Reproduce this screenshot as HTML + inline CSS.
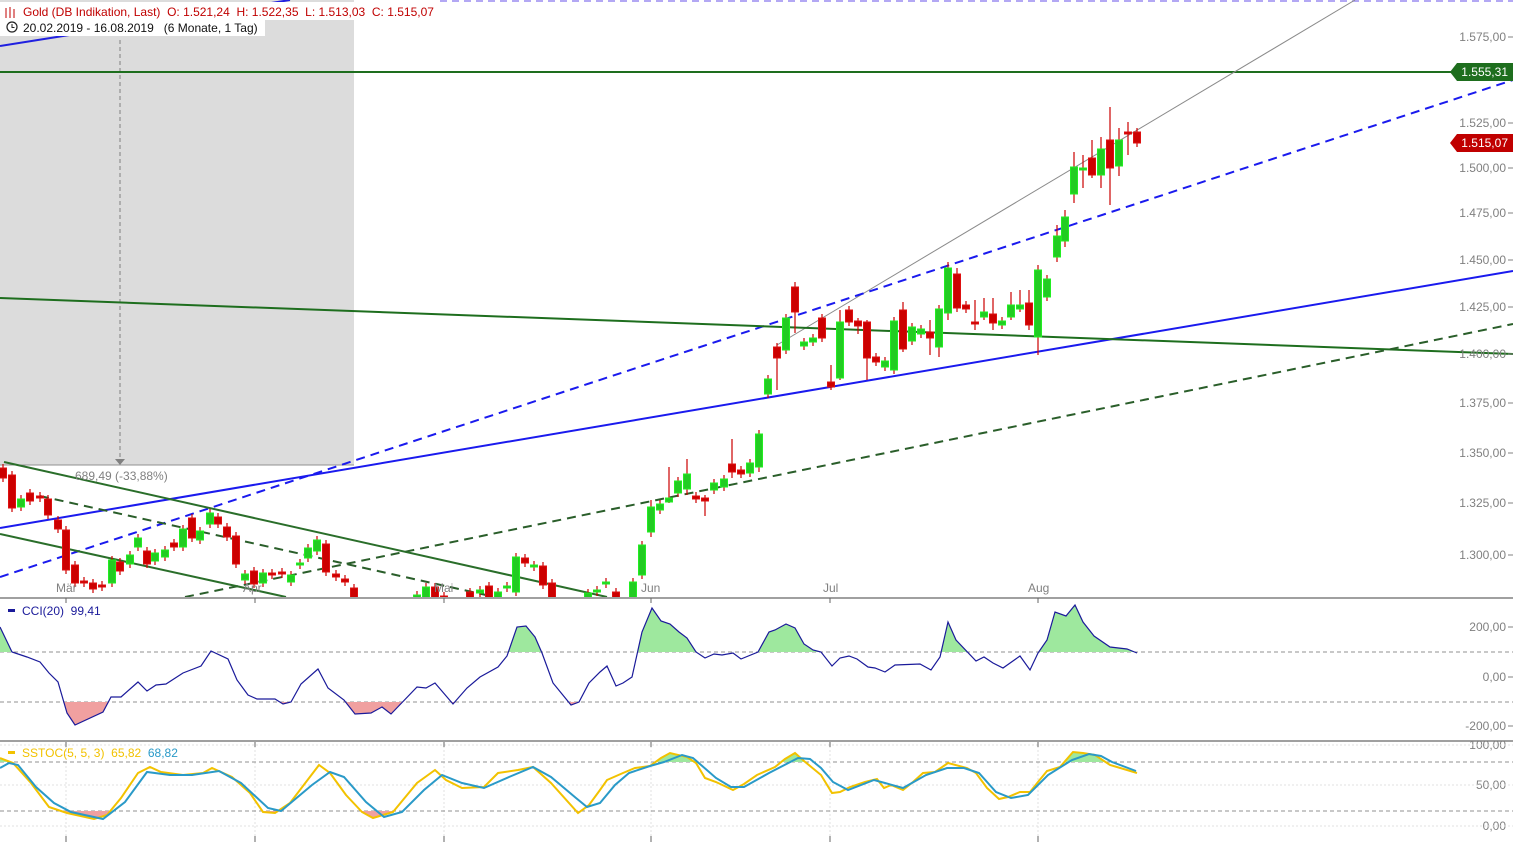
<!DOCTYPE html>
<html><head><meta charset="utf-8"><style>
html,body{margin:0;padding:0;background:#fff;width:1513px;height:842px;overflow:hidden}
svg{display:block;font-family:"Liberation Sans",sans-serif}
.pre{white-space:pre}
</style></head><body>
<svg id="s" width="1513" height="842" xmlns="http://www.w3.org/2000/svg" xml:space="preserve">
<defs>
<clipPath id="cmain"><rect x="0" y="0" width="1513" height="597"/></clipPath>
<clipPath id="cabove"><rect x="0" y="598" width="1513" height="54"/></clipPath>
<clipPath id="cbelow"><rect x="0" y="702" width="1513" height="40"/></clipPath>
<clipPath id="sabove"><rect x="0" y="742" width="1513" height="20"/></clipPath>
<clipPath id="sbelow"><rect x="0" y="811" width="1513" height="30"/></clipPath>
</defs>
<g clip-path="url(#cmain)">
<rect x="0" y="0" width="354" height="465" fill="#dcdcdc"/>
<line x1="440" y1="1" x2="1513" y2="1" stroke="#9a8cf0" stroke-width="1.5" stroke-dasharray="7,5"/>
<line x1="120" y1="40" x2="120" y2="460" stroke="#808080" stroke-dasharray="4,3"/>
<polygon points="115,459 125,459 120,465" fill="#808080"/>
<line x1="0" y1="465" x2="354" y2="465" stroke="#909090"/>
<line x1="0" y1="46" x2="290" y2="0" stroke="#2020e0" stroke-width="2"/>
<line x1="0" y1="72" x2="1513" y2="72" stroke="#1e6e1e" stroke-width="2"/>
<line x1="777" y1="345" x2="1355" y2="0" stroke="#8a8a8a" stroke-width="1"/>
<line x1="0" y1="577" x2="1513" y2="80" stroke="#1a1aee" stroke-width="2" stroke-dasharray="9,6"/>
<line x1="0" y1="528" x2="1513" y2="271" stroke="#1a1aee" stroke-width="2"/>
<line x1="0" y1="298" x2="1513" y2="354" stroke="#1e6e1e" stroke-width="2"/>
<line x1="185" y1="597" x2="1513" y2="324" stroke="#2a5e2a" stroke-width="2" stroke-dasharray="9,6"/>
<line x1="4" y1="462" x2="607" y2="597" stroke="#2a6e2a" stroke-width="2"/>
<line x1="0" y1="534" x2="286" y2="597" stroke="#2a6e2a" stroke-width="2"/>
<line x1="40" y1="496" x2="495" y2="597" stroke="#2a5e2a" stroke-width="2" stroke-dasharray="9,6"/>
<g id="candles"></g>
</g>
<text x="75" y="480" font-size="12" fill="#808080">689,49 (-33,88%)</text>
<rect x="0" y="2" width="440" height="18" fill="#fff"/>
<rect x="0" y="20" width="265" height="16" fill="#fff"/>
<g stroke="#c00000" stroke-width="1"><line x1="6" y1="8" x2="6" y2="18"/><line x1="10" y1="7" x2="10" y2="18"/><line x1="14" y1="9" x2="14" y2="18"/></g>
<text class="pre" x="23" y="16" font-size="12" fill="#c00000">Gold (DB Indikation, Last)  O: 1.521,24  H: 1.522,35  L: 1.513,03  C: 1.515,07</text>
<circle cx="12" cy="27" r="5" fill="none" stroke="#222" stroke-width="1.2"/><path d="M12 24v3.5h2.5" stroke="#222" fill="none"/>
<text class="pre" x="23" y="32" font-size="12" fill="#111">20.02.2019 - 16.08.2019   (6 Monate, 1 Tag)</text>
<g font-size="12" fill="#808080" text-anchor="end">
<text x="1506" y="41">1.575,00</text><text x="1506" y="127">1.525,00</text><text x="1506" y="172">1.500,00</text>
<text x="1506" y="217">1.475,00</text><text x="1506" y="264">1.450,00</text><text x="1506" y="311">1.425,00</text>
<text x="1506" y="358">1.400,00</text><text x="1506" y="407">1.375,00</text><text x="1506" y="457">1.350,00</text>
<text x="1506" y="507">1.325,00</text><text x="1506" y="559">1.300,00</text>
<text x="1506" y="631">200,00</text><text x="1506" y="681">0,00</text><text x="1506" y="730">-200,00</text>
<text x="1506" y="749">100,00</text><text x="1506" y="789">50,00</text><text x="1506" y="830">0,00</text>
</g>
<g stroke="#808080"><line x1="1508" y1="37" x2="1513" y2="37"/><line x1="1508" y1="123" x2="1513" y2="123"/><line x1="1508" y1="168" x2="1513" y2="168"/><line x1="1508" y1="213" x2="1513" y2="213"/><line x1="1508" y1="260" x2="1513" y2="260"/><line x1="1508" y1="307" x2="1513" y2="307"/><line x1="1508" y1="354" x2="1513" y2="354"/><line x1="1508" y1="403" x2="1513" y2="403"/><line x1="1508" y1="453" x2="1513" y2="453"/><line x1="1508" y1="503" x2="1513" y2="503"/><line x1="1508" y1="555" x2="1513" y2="555"/><line x1="1508" y1="627" x2="1513" y2="627"/><line x1="1508" y1="677" x2="1513" y2="677"/><line x1="1508" y1="726" x2="1513" y2="726"/></g>
<polygon points="1450,72 1457,63 1513,63 1513,81 1457,81" fill="#1e6e1e"/>
<text x="1508" y="76" font-size="12" fill="#fff" text-anchor="end">1.555,31</text>
<polygon points="1450,143 1457,134 1513,134 1513,152 1457,152" fill="#c00000"/>
<text x="1508" y="147" font-size="12" fill="#fff" text-anchor="end">1.515,07</text>
<g font-size="12" fill="#808080"><text x="56" y="592">Mär</text><text x="243" y="592">Apr</text><text x="434" y="592">Mai</text><text x="641" y="592">Jun</text><text x="823" y="592">Jul</text><text x="1028" y="592">Aug</text></g>
<line x1="0" y1="598" x2="1513" y2="598" stroke="#808080" stroke-width="1.5"/>
<line x1="0" y1="741" x2="1513" y2="741" stroke="#808080" stroke-width="1.5"/>
<g stroke="#e0e0e0" stroke-dasharray="2,2"><line x1="66" y1="742" x2="66" y2="842"/><line x1="255" y1="742" x2="255" y2="842"/><line x1="444" y1="742" x2="444" y2="842"/><line x1="651" y1="742" x2="651" y2="842"/><line x1="830" y1="742" x2="830" y2="842"/><line x1="1038" y1="742" x2="1038" y2="842"/>
<line x1="0" y1="745" x2="1513" y2="745"/><line x1="0" y1="785" x2="1513" y2="785"/><line x1="0" y1="826" x2="1513" y2="826"/></g>
<g stroke="#666"><line x1="66" y1="598" x2="66" y2="603"/><line x1="255" y1="598" x2="255" y2="603"/><line x1="444" y1="598" x2="444" y2="603"/><line x1="651" y1="598" x2="651" y2="603"/><line x1="830" y1="598" x2="830" y2="603"/><line x1="1038" y1="598" x2="1038" y2="603"/>
<line x1="66" y1="742" x2="66" y2="747"/><line x1="255" y1="742" x2="255" y2="747"/><line x1="444" y1="742" x2="444" y2="747"/><line x1="651" y1="742" x2="651" y2="747"/><line x1="830" y1="742" x2="830" y2="747"/><line x1="1038" y1="742" x2="1038" y2="747"/>
<line x1="66" y1="836" x2="66" y2="842"/><line x1="255" y1="836" x2="255" y2="842"/><line x1="444" y1="836" x2="444" y2="842"/><line x1="651" y1="836" x2="651" y2="842"/><line x1="830" y1="836" x2="830" y2="842"/><line x1="1038" y1="836" x2="1038" y2="842"/></g>
<g stroke="#909090" stroke-dasharray="4,3"><line x1="0" y1="652" x2="1513" y2="652"/><line x1="0" y1="702" x2="1513" y2="702"/><line x1="0" y1="762" x2="1513" y2="762"/><line x1="0" y1="811" x2="1513" y2="811"/></g>
<g id="ind"></g>
<rect x="8" y="609" width="7" height="3" fill="#1a1a9a"/>
<text class="pre" x="22" y="615" font-size="12" fill="#1a1a9a">CCI(20)  99,41</text>
<rect x="8" y="751" width="7" height="3" fill="#f2c200"/>
<text class="pre" x="22" y="757" font-size="12" fill="#f2c200">SSTOC(5, 5, 3)  65,82  <tspan fill="#2a9ac8">68,82</tspan></text>
</svg>
<script>
var C=[[3,468,478,'r'],[12,475,508,'r'],[21,507,499,'g'],[30,493,501,'r'],[40,496,498,'r'],[48,499,515,'r'],[58,520,529,'r'],[66,530,570,'r'],[75,565,583,'r'],[84,581,583,'r'],[93,583,589,'r'],[102,585,587,'r'],[112,583,560,'g'],[120,562,571,'r'],[130,564,555,'g'],[138,547,538,'g'],[147,551,564,'r'],[155,561,553,'g'],[165,557,550,'g'],[174,543,547,'r'],[183,547,529,'g'],[192,518,538,'r'],[200,540,531,'g'],[210,524,513,'g'],[218,517,524,'r'],[227,527,537,'r'],[236,536,564,'r'],[245,580,574,'g'],[254,571,584,'r'],[263,583,573,'g'],[272,573,575,'r'],[282,572,574,'r'],[291,582,575,'g'],[300,565,563,'g'],[308,558,548,'g'],[317,551,540,'g'],[326,544,572,'r'],[336,574,577,'r'],[345,579,582,'r'],[354,588,600,'r'],[417,600,595,'g'],[426,600,587,'g'],[435,587,600,'r'],[444,596,600,'r'],[470,592,600,'r'],[480,593,590,'g'],[489,586,600,'r'],[498,600,592,'g'],[507,587,586,'g'],[516,592,557,'g'],[525,558,563,'r'],[534,566,565,'g'],[543,566,585,'r'],[552,583,600,'r'],[588,600,593,'g'],[597,592,590,'g'],[606,584,582,'g'],[616,592,600,'r'],[633,598,582,'g'],[642,575,545,'g'],[651,532,507,'g'],[660,510,504,'g'],[669,502,498,'g'],[678,493,481,'g'],[687,489,474,'g'],[696,496,499,'r'],[705,498,501,'r'],[714,490,483,'g'],[724,487,479,'g'],[732,464,472,'r'],[741,470,474,'r'],[750,473,463,'g'],[759,467,434,'g'],[768,394,379,'g'],[777,347,358,'r'],[786,350,318,'g'],[795,287,312,'r'],[804,346,342,'g'],[813,342,338,'g'],[822,318,338,'r'],[831,382,387,'r'],[840,378,322,'g'],[849,310,322,'r'],[858,321,326,'r'],[867,322,358,'r'],[876,357,362,'r'],[885,367,361,'g'],[894,370,321,'g'],[903,310,349,'r'],[912,341,327,'g'],[921,334,329,'g'],[930,332,338,'r'],[939,347,309,'g'],[948,313,268,'g'],[957,274,308,'r'],[966,305,309,'r'],[975,322,324,'r'],[984,317,312,'g'],[993,314,323,'r'],[1002,325,321,'g'],[1011,317,305,'g'],[1020,309,305,'g'],[1029,303,325,'r'],[1038,337,270,'g'],[1047,297,279,'g'],[1057,257,236,'g'],[1065,241,217,'g'],[1074,194,167,'g'],[1083,170,168,'g'],[1092,158,175,'r'],[1101,175,149,'g'],[1110,140,168,'r'],[1119,166,140,'g'],[1128,132,134,'r'],[1137,132,143,'r']];
var W={795:[282,333],1110:[107,205],1128:[122,155],777:[343,390],759:[430,472],831:[365,390],732:[439,478],705:[495,516],687:[459,495],669:[467,503],651:[500,537],1074:[152,203],1092:[140,178],1101:[137,188],1119:[128,176],1083:[155,188],1057:[225,262],1065:[210,247],948:[262,320],957:[268,312],975:[300,330],993:[298,330],984:[298,320],1011:[292,320],1020:[290,312],1029:[290,330],1038:[265,355],840:[310,380],867:[320,380],903:[302,352],930:[320,355],939:[305,357],858:[318,334]};
var h='';C.forEach(function(c){var x=c[0],t=Math.min(c[1],c[2]),b=Math.max(c[1],c[2]);if(b-t<2){b=t+2;}var w=W[x]||[t-4,b+4];var col=c[3]=='g'?'#22cc22':'#cc0000';var bc=c[3]=='g'?'#22ee22':'#dd1111';
h+='<line x1="'+x+'" y1="'+w[0]+'" x2="'+x+'" y2="'+w[1]+'" stroke="#cc0000" stroke-width="1.2"/>';
h+='<rect x="'+(x-3.5)+'" y="'+t+'" width="7" height="'+(b-t)+'" fill="'+col+'" stroke="'+bc+'" stroke-width="1"/>';});
document.getElementById('candles').innerHTML=h;
var cci=[[0,627],[12,652],[27,657],[40,662],[49,673],[58,682],[67,713],[75,725],[103,712],[111,697],[121,697],[138,682],[147,691],[156,685],[166,684],[183,673],[201,666],[211,651],[228,659],[237,680],[248,695],[257,699],[275,699],[283,704],[291,702],[301,684],[318,669],[328,688],[344,700],[355,714],[371,713],[382,707],[391,714],[417,687],[426,688],[435,683],[453,704],[467,688],[480,677],[498,667],[507,656],[517,627],[526,626],[535,637],[542,653],[553,683],[571,705],[579,702],[589,683],[600,672],[607,666],[616,686],[623,683],[632,677],[642,632],[652,608],[661,621],[670,624],[679,632],[687,638],[696,652],[705,658],[714,654],[722,655],[733,653],[741,659],[758,652],[769,632],[775,630],[786,624],[795,628],[804,644],[813,650],[821,652],[832,666],[840,658],[849,656],[857,659],[868,667],[875,668],[885,672],[895,665],[920,664],[931,670],[940,657],[948,622],[956,640],[976,661],[984,657],[993,663],[1003,668],[1020,656],[1030,670],[1038,653],[1047,640],[1055,612],[1066,616],[1075,605],[1083,622],[1094,636],[1110,647],[1127,649],[1137,653]];
function pts(a){return a.map(function(p){return p[0]+','+p[1]}).join(' ');}
var last=cci[cci.length-1][0];
var s='';
s+='<polygon clip-path="url(#cabove)" points="0,652 '+pts(cci)+' '+last+',652" fill="#9ee89e"/>';
s+='<polygon clip-path="url(#cbelow)" points="0,702 '+pts(cci)+' '+last+',702" fill="#f0a0a0"/>';
s+='<polyline points="'+pts(cci)+'" fill="none" stroke="#1a1a9a" stroke-width="1.2"/>';
var y=[[0,758],[13,763],[31,783],[49,807],[67,813],[94,819],[107,815],[121,798],[138,773],[150,767],[161,772],[183,775],[203,773],[212,768],[232,777],[250,793],[263,812],[275,813],[290,803],[319,765],[330,773],[346,795],[362,812],[373,818],[393,812],[417,783],[435,770],[446,780],[462,788],[484,787],[498,773],[518,770],[533,767],[551,783],[578,813],[589,805],[600,790],[607,780],[623,773],[635,768],[650,766],[661,758],[670,753],[687,757],[696,763],[705,778],[716,782],[733,790],[744,784],[757,775],[775,767],[785,759],[795,753],[804,761],[821,775],[832,793],[840,792],[850,787],[865,782],[877,779],[884,788],[891,785],[903,790],[913,782],[923,773],[935,772],[948,763],[967,768],[976,773],[987,788],[999,799],[1008,797],[1020,792],[1030,792],[1038,782],[1047,771],[1060,767],[1073,752],[1083,753],[1095,755],[1110,765],[1127,770],[1137,773]];
var b=[[0,768],[9,763],[18,765],[36,787],[54,803],[71,812],[103,819],[125,802],[147,772],[170,775],[192,775],[219,771],[241,783],[268,808],[281,811],[312,785],[330,772],[344,777],[366,802],[384,817],[402,812],[424,790],[442,775],[462,783],[484,788],[509,777],[533,767],[551,777],[576,798],[587,807],[600,803],[615,785],[629,773],[650,766],[664,762],[682,755],[693,758],[716,778],[731,787],[744,787],[769,773],[798,758],[810,759],[821,768],[833,782],[848,790],[874,780],[885,783],[903,788],[926,775],[947,768],[964,768],[979,773],[996,792],[1011,798],[1028,795],[1048,775],[1072,760],[1089,754],[1101,756],[1112,762],[1136,771]];
s+='<polygon clip-path="url(#sabove)" points="0,762 '+pts(y)+' 1137,762" fill="#9ee89e"/>';
s+='<polygon clip-path="url(#sbelow)" points="0,811 '+pts(y)+' 1137,811" fill="#f0a0a0"/>';
s+='<polyline points="'+pts(y)+'" fill="none" stroke="#f2c200" stroke-width="2"/>';
s+='<polyline points="'+pts(b)+'" fill="none" stroke="#2a9ac8" stroke-width="2"/>';
document.getElementById('ind').innerHTML=s;
</script>
</body></html>
